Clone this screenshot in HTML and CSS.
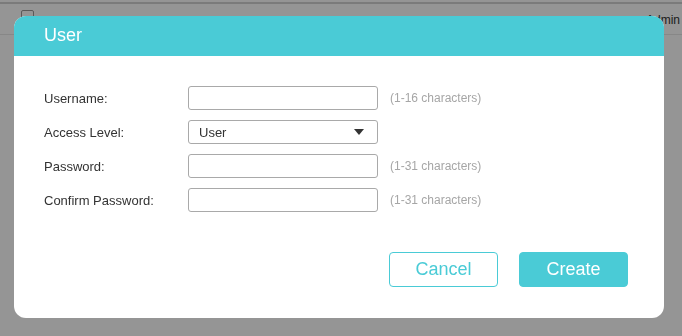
FILE: index.html
```html
<!DOCTYPE html>
<html>
<head>
<meta charset="utf-8">
<link rel="stylesheet" href="styles.css">
</head>
<body>
<div class="page">
  <div class="table-head">
    <span class="chk"></span>
    <span class="th th-name">Username</span>
    <span class="th th-level">Access Level</span>
    <span class="th th-right">Admin</span>
  </div>
  <div class="table-row"></div>
</div>
<div class="overlay">
  <div class="modal">
    <div class="modal-head">User</div>
    <div class="modal-body">
      <div class="form">
        <div class="row">
          <label class="lbl">Username:</label>
          <div class="field"></div>
          <span class="hint">(1-16 characters)</span>
        </div>
        <div class="row">
          <label class="lbl">Access Level:</label>
          <div class="field select">
            <span>User</span>
            <svg class="arrow" width="10" height="6" viewBox="0 0 10 6"><polygon points="0,0 10,0 5,6" fill="#333"/></svg>
          </div>
        </div>
        <div class="row">
          <label class="lbl">Password:</label>
          <div class="field"></div>
          <span class="hint">(1-31 characters)</span>
        </div>
        <div class="row">
          <label class="lbl">Confirm Password:</label>
          <div class="field"></div>
          <span class="hint">(1-31 characters)</span>
        </div>
      </div>
      <div class="actions">
        <button class="btn btn-cancel">Cancel</button>
        <button class="btn btn-create">Create</button>
      </div>
    </div>
  </div>
</div>
</body>
</html>
```
FILE: styles.css
```css
* { box-sizing: border-box; }
html, body { margin: 0; padding: 0; }
body {
  width: 682px;
  height: 336px;
  overflow: hidden;
  background: #fff;
  font-family: "Liberation Sans", Arial, sans-serif;
}
.page { padding-top: 2px; }
.table-head {
  border-top: 2px solid #d2d2d2;
  border-bottom: 1px solid #e8e8e8;
  height: 33px;
  display: flex;
  align-items: flex-start;
  white-space: nowrap;
  overflow: hidden;
  font-size: 13px;
  color: #333;
}
.chk {
  margin: 6px 0 0 21px;
  width: 13px;
  height: 13px;
  border: 1px solid #999;
  border-radius: 2px;
  flex: none;
}
.th { margin-top: 9px; line-height: 15px; flex: none; }
.th-name { margin-left: 139px; width: 200px; }
.th-level { margin-left: 50px; width: 200px; }
.th-right { margin-left: 23px; font-size: 12px; }
.table-row { height: 30px; }

.overlay {
  position: fixed;
  inset: 0;
  background: rgba(0, 0, 0, 0.416);
  padding: 16px 18px 18px 14px;
}
.modal {
  width: 650px;
  height: 302px;
  background: #fff;
  border-radius: 12px;
  overflow: hidden;
  display: flex;
  flex-direction: column;
}
.modal-head {
  height: 40px;
  background: #4acbd6;
  color: #fff;
  font-size: 18px;
  line-height: 39px;
  padding-left: 30px;
}
.modal-body {
  flex: 1;
  padding: 30px 36px 0 30px;
  display: flex;
  flex-direction: column;
}
.form {
  display: flex;
  flex-direction: column;
  gap: 10px;
}
.row {
  display: flex;
  align-items: center;
  height: 24px;
}
.lbl {
  width: 144px;
  font-size: 13px;
  color: #333;
}
.field {
  width: 190px;
  height: 24px;
  border: 1px solid #a9a9a9;
  border-radius: 3px;
  background: #fff;
}
.select {
  display: flex;
  align-items: center;
  justify-content: space-between;
  padding: 0 13px 0 10px;
  font-size: 13px;
  color: #333;
}
.hint {
  margin-left: 12px;
  font-size: 12px;
  color: #a6a6a6;
}
.actions {
  margin-top: 40px;
  display: flex;
  justify-content: flex-end;
  gap: 21px;
}
.btn {
  width: 109px;
  height: 35px;
  border-radius: 4px;
  font-family: "Liberation Sans", Arial, sans-serif;
  font-size: 18px;
  padding: 0;
  cursor: pointer;
}
.btn-cancel {
  background: #fff;
  color: #4acbd6;
  border: 1px solid #4acbd6;
}
.btn-create {
  background: #4acbd6;
  color: #fff;
  border: 1px solid #4acbd6;
}
```
